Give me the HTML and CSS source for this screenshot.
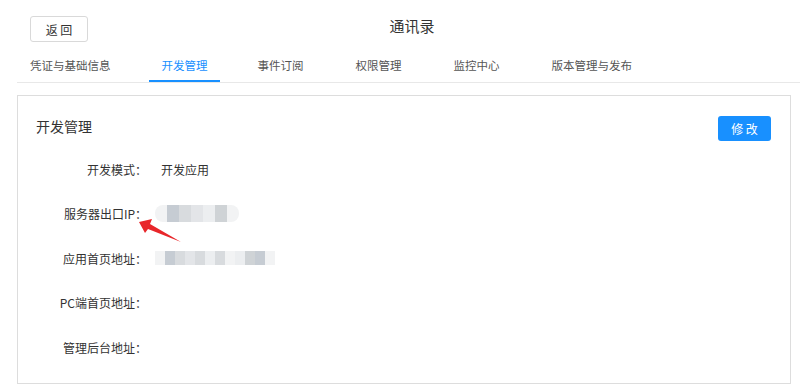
FILE: index.html
```html
<!DOCTYPE html>
<html>
<head>
	<meta charset="utf-8">
	<title>通讯录</title>
	<link rel="stylesheet" href="styles.css">
</head>
<body>
	<div class="top">
		<button class="back">返 回</button>
		<div class="title">通讯录</div>
	</div>
	<div class="tabs">
		<div class="tab">凭证与基础信息</div>
		<div class="tab active">开发管理</div>
		<div class="tab">事件订阅</div>
		<div class="tab">权限管理</div>
		<div class="tab">监控中心</div>
		<div class="tab">版本管理与发布</div>
	</div>
	<div class="card">
		<div class="card-head">
			<h2>开发管理</h2>
			<button class="edit">修 改</button>
		</div>
		<div class="rows">
			<div class="row">
				<div class="label">开发模式：</div>
				<div class="value">开发应用</div>
			</div>
			<div class="row">
				<div class="label">服务器出口IP：</div>
				<div class="value blur ip">
					<span class="p5"></span><span class="p1"></span><span class="p3"></span><span class="p2"></span><span class="p4"></span><span class="p6"></span><span class="p5"></span>
				</div>
			</div>
			<div class="row">
				<div class="label">应用首页地址：</div>
				<div class="value blur url">
					<span class="p5"></span><span class="p1"></span><span class="p3"></span><span class="p2"></span><span class="p3"></span><span class="p4"></span><span class="p3"></span><span class="p5"></span><span class="p4"></span><span class="p6"></span><span class="p1"></span><span class="p5"></span>
				</div>
			</div>
			<div class="row">
				<div class="label">PC端首页地址：</div>
				<div class="value"></div>
			</div>
			<div class="row">
				<div class="label">管理后台地址：</div>
				<div class="value"></div>
			</div>
		</div>
		<svg class="arrow" width="50" height="30" viewBox="0 0 50 30">
			<path d="M1 6 L14 3 L12 8 L43 26 L10 13 L7 17 Z" fill="#e8262a"/>
		</svg>
	</div>
</body>
</html>
```

FILE: styles.css
```css
body {
	margin: 0;
	padding: 0;
	background: #fff;
	color: #333;
	font-family: "Noto Sans CJK SC", "Liberation Sans", sans-serif;
	font-size: 12px;
	width: 800px;
	height: 391px;
	overflow: hidden;
}
.top {
	position: relative;
	height: 52px;
}
.back {
	position: absolute;
	left: 30px;
	top: 16px;
	width: 58px;
	height: 26px;
	background: #fff;
	border: 1px solid #d9d9d9;
	border-radius: 3px;
	font-family: inherit;
	font-size: 12px;
	color: #333;
	padding: 0;
}
.title {
	text-align: center;
	padding-top: 15px;
	padding-left: 24px;
	font-size: 15px;
	color: #333;
}
.tabs {
	display: flex;
	margin-left: 17px;
	border-bottom: 1px solid #e8e8e8;
	height: 30px;
}
.tab {
	padding: 5px 13px 0;
	margin-right: 26px;
	color: #555;
	font-size: 11.5px;
	height: 23px;
	border-bottom: 2px solid transparent;
}
.tab:first-child { padding-right: 12px; }
.tab.active {
	color: #1890ff;
	padding-right: 12px;
	margin-right: 25px;
	border-bottom-color: #1890ff;
}
.card {
	position: relative;
	margin: 12px 9px 0 17px;
	border: 1px solid #ddd;
	height: 289px;
	box-sizing: border-box;
}
.card-head {
	display: flex;
	justify-content: space-between;
	align-items: flex-start;
	padding: 20px 19px 0 18px;
}
.card-head h2 {
	margin: 0;
	font-size: 14px;
	line-height: 20px;
	font-weight: normal;
	color: #333;
}
.edit {
	width: 53px;
	height: 25px;
	background: #1890ff;
	color: #fff;
	border: none;
	border-radius: 3px;
	font-family: inherit;
	font-size: 12px;
	padding: 0;
}
.rows {
	padding-top: 6px;
}
.row {
	display: flex;
	align-items: center;
	height: 44.5px;
}
.label {
	width: 129px;
	text-align: right;
	color: #333;
}
.value {
	margin-left: 14px;
	color: #333;
}
.blur {
	display: flex;
	height: 17px;
	margin-left: 8px;
	border-radius: 8px;
	overflow: hidden;
}
.blur span {
	width: 12px;
	height: 17px;
}
.url { height: 14px; border-radius: 0; }
.url span { width: 10px; height: 14px; }
.p1 { background: #c6ccd3; }
.p2 { background: #e3e5e8; }
.p3 { background: #d8dbde; }
.p4 { background: #eceef0; }
.p5 { background: #f2f3f4; }
.p6 { background: #cfd3d6; }
.arrow {
	position: absolute;
	left: 120px;
	top: 120px;
}
```
